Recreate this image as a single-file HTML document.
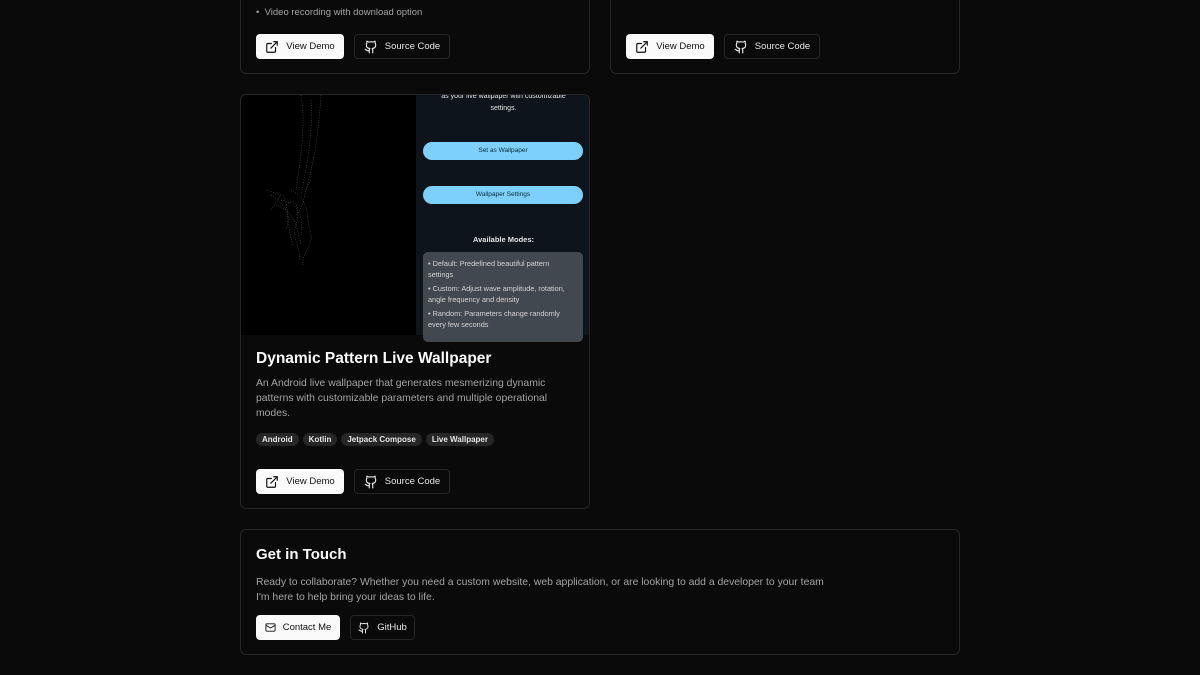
<!DOCTYPE html>
<html><head><meta charset="utf-8"><style>
*{box-sizing:border-box;margin:0;padding:0}
body{width:1200px;height:675px;background:#0a0a0a;font-family:"Liberation Sans",sans-serif;color:#fafafa;position:relative;overflow:hidden}
.card{position:absolute;border:1px solid #262626;border-radius:6px;background:#0a0a0a;overflow:hidden}
.btn{position:absolute;height:25px;border-radius:4px;font-size:9.5px;display:flex;align-items:center;justify-content:center;gap:7px;padding:0 6px;white-space:nowrap}
.btn svg{flex:none}
.w{background:#fafafa;color:#111}
.d{border:1px solid #262626;color:#e5e5e5;background:#0a0a0a}
.muted{color:#a3a3a3}
.tag{display:inline-block;background:#262626;color:#e5e5e5;font-size:8px;font-weight:bold;padding:2px 6px;border-radius:8px;margin-right:4px}
</style></head><body>
<svg width="0" height="0" style="position:absolute"><defs>
<symbol id="ext" viewBox="0 0 24 24"><g fill="none" stroke="currentColor" stroke-width="2" stroke-linecap="round" stroke-linejoin="round"><path d="M15 3h6v6"/><path d="M10 14 21 3"/><path d="M18 13v6a2 2 0 0 1-2 2H5a2 2 0 0 1-2-2V8a2 2 0 0 1 2-2h6"/></g></symbol>
<symbol id="gh" viewBox="0 0 24 24"><g fill="none" stroke="currentColor" stroke-width="2" stroke-linecap="round" stroke-linejoin="round"><path d="M15 22v-4a4.8 4.8 0 0 0-1-3.5c3 0 6-2 6-5.5.08-1.25-.27-2.48-1-3.5.28-1.150.28-2.35 0-3.5 0 0-1 0-3 1.5-2.64-.5-5.36-.5-8 0C6 2 5 2 5 2c-.3 1.15-.3 2.35 0 3.5A5.403 5.403 0 0 0 4 9c0 3.5 3 5.5 6 5.5-.39.49-.68 1.05-.85 1.65-.17.6-.22 1.23-.15 1.850v4"/><path d="M9 18c-4.51 2-5-2-7-2"/></g></symbol>
</defs></svg>

<div class="card" style="left:240px;top:-10px;width:350px;height:84px">
<div class="muted" style="position:absolute;left:15px;top:16px;font-size:9.5px">•&nbsp;&nbsp;Video recording with download option</div>
<div class="btn w" style="left:15px;top:43px;width:88px"><svg width="14" height="14"><use href="#ext"/></svg>View Demo</div>
<div class="btn d" style="left:113px;top:43px;width:96px"><svg width="14" height="14"><use href="#gh"/></svg>Source Code</div>
</div>
<div class="card" style="left:610px;top:-10px;width:350px;height:84px">
<div class="btn w" style="left:15px;top:43px;width:88px"><svg width="14" height="14"><use href="#ext"/></svg>View Demo</div>
<div class="btn d" style="left:113px;top:43px;width:96px"><svg width="14" height="14"><use href="#gh"/></svg>Source Code</div>
</div>

<div class="card" style="left:240px;top:94px;width:350px;height:415px">
<div style="position:absolute;left:0;top:0;width:175px;height:240px;background:#000">
<svg width="175" height="240" style="position:absolute;left:0;top:0"><g stroke="#ccc" stroke-width="0.4" fill="none" opacity="0.6" stroke-dasharray="1 1.5">
<path d="M45 110 C55 100 60 115 55 130 C50 145 60 150 58 165"/><path d="M40 105 C60 108 62 125 60 140"/><path d="M50 95 C70 105 65 125 70 140 C72 150 60 160 62 170"/><path d="M30 100 C45 110 50 120 45 135"/><path d="M55 120 C65 110 62 95 70 85"/><path d="M70 5 C72 40 66 70 60 100"/><path d="M80 0 C78 30 75 60 65 95"/><path d="M25 95 L40 100 L30 115"/><path d="M35 110 C50 115 55 125 60 150"/><path d="M42 100 C50 120 45 130 52 150"/><path d="M60 0 C65 30 60 60 55 95"/>
</g></svg>
</div>
<div style="position:absolute;left:175px;top:0;width:175px;height:240px;background:#0d141b;font-size:7px;color:#e5e5e5;text-align:center">
<div style="margin-top:-4px;line-height:12px">as your live wallpaper with customizable<br>settings.</div>
<div style="position:absolute;left:7px;top:47px;width:160px;height:18px;border-radius:9px;background:#7cd0fb;color:#0d2a3a;line-height:18px;font-size:6.5px">Set as Wallpaper</div>
<div style="position:absolute;left:7px;top:91px;width:160px;height:18px;border-radius:9px;background:#7cd0fb;color:#0d2a3a;line-height:18px;font-size:6.5px">Wallpaper Settings</div>
<div style="position:absolute;left:0;top:140px;width:175px;font-weight:bold;font-size:7.5px">Available Modes:</div>
<div style="position:absolute;left:7px;top:157px;width:160px;height:90px;border-radius:5px;background:#42484f;text-align:left;padding:6px 5px 0 5px;font-size:7.3px;line-height:11px;color:#d4d4d4"><div style="width:140px">• Default: Predefined beautiful pattern settings</div><div style="height:3px"></div><div style="width:140px">• Custom: Adjust wave amplitude, rotation, angle frequency and density</div><div style="height:3px"></div><div style="width:140px">• Random: Parameters change randomly every few seconds</div></div>
</div>
<div style="position:absolute;left:15px;top:255px;font-size:15.5px;font-weight:bold">Dynamic Pattern Live Wallpaper</div>
<div class="muted" style="position:absolute;left:15px;top:281px;width:310px;font-size:10.4px;line-height:15px">An Android live wallpaper that generates mesmerizing dynamic patterns with customizable parameters and multiple operational modes.</div>
<div style="position:absolute;left:15px;top:334px"><span class="tag">Android</span><span class="tag">Kotlin</span><span class="tag">Jetpack Compose</span><span class="tag">Live Wallpaper</span></div>
<div class="btn w" style="left:15px;top:374px;width:88px"><svg width="14" height="14"><use href="#ext"/></svg>View Demo</div>
<div class="btn d" style="left:113px;top:374px;width:96px"><svg width="14" height="14"><use href="#gh"/></svg>Source Code</div>
</div>

<div class="card" style="left:240px;top:529px;width:720px;height:126px">
<div style="position:absolute;left:15px;top:16px;font-size:15px;font-weight:bold">Get in Touch</div>
<div class="muted" style="position:absolute;left:15px;top:45px;font-size:10.4px;line-height:15px">Ready to collaborate? Whether you need a custom website, web application, or are looking to add a developer to your team<br>I'm here to help bring your ideas to life.</div>
<div class="btn w" style="left:15px;top:85px;width:84px"><svg width="11" height="11" viewBox="0 0 24 24" fill="none" stroke="currentColor" stroke-width="2"><rect x="2" y="4" width="20" height="16" rx="2"/><path d="m22 7-10 6L2 7"/></svg>Contact Me</div>
<div class="btn d" style="left:109px;top:85px;width:65px"><svg width="12" height="12"><use href="#gh"/></svg>GitHub</div>
</div>
</body></html>
